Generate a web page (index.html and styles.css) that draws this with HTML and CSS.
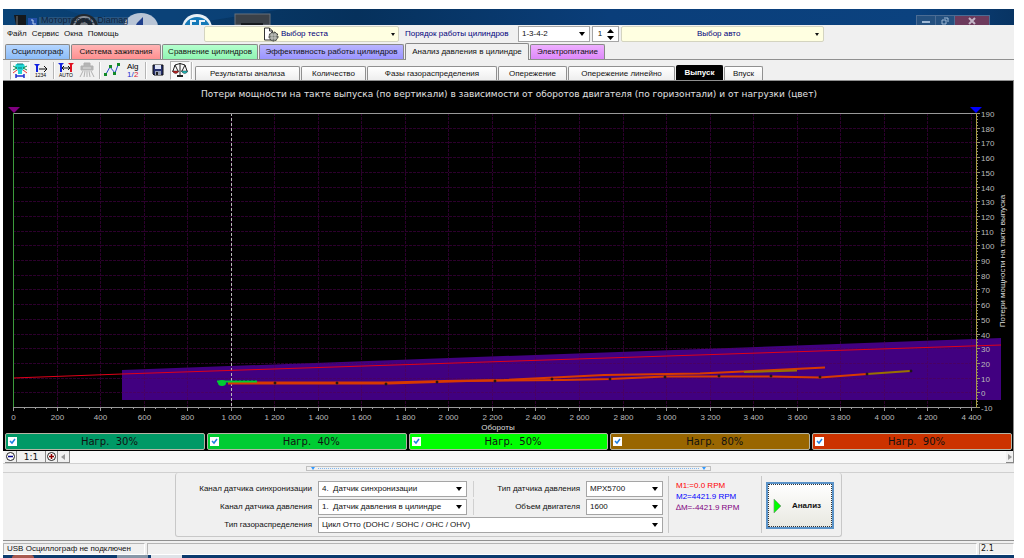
FILE: index.html
```
<!DOCTYPE html>
<html lang="ru">
<head>
    <meta charset="UTF-8">
    <meta name="viewport" content="width=device-width, initial-scale=1.0">
    <title>USB Осциллограф</title>
    <link rel="stylesheet" href="styles.css">
</head>
<body>
    <div class="app">
        <div class="titlebar">
            <svg class="desktop" width="280" height="16" viewBox="0 0 280 16" aria-hidden="true">
                <path d="M60 0L280 0L180 16L110 16Z" fill="#0d4a86" opacity=".5"/>
                <path d="M11 6h12v10H13z" fill="#15181c"/>
                <path d="M14 7v9" stroke="#777" stroke-width="1"/>
                <rect x="25" y="9" width="9" height="7" fill="#2450a8"/>
                <path d="M28 11h2v4h3" stroke="#b8d0f0" fill="none"/>
                <path d="M36 8h96v8H36z" fill="#3d6489" opacity=".6"/>
                <ellipse cx="81" cy="18" rx="14" ry="13" fill="#23282e"/>
                <ellipse cx="81" cy="18" rx="10" ry="10" fill="none" stroke="#8a9098" stroke-width="2"/>
                <circle cx="81" cy="17" r="4" fill="#777c82"/>
                <ellipse cx="138" cy="18" rx="17" ry="14" fill="#b9c5d6"/>
                <path d="M134 14l6-6v8h-7z" fill="#1f3f8c"/>
                <ellipse cx="194" cy="19" rx="15" ry="14" fill="#e8f0f6"/>
                <ellipse cx="194" cy="20" rx="13" ry="12" fill="#1479b8"/>
                <path d="M188 16v-4h5M197 16v-4h5" stroke="#e8f0f6" stroke-width="2" fill="none"/>
                <rect x="232" y="5" width="35" height="11" fill="#3b4148" stroke="#68717a"/>
                <path d="M238 15h22" stroke="#161a1f" stroke-width="2"/>
                <text class="caption" x="38" y="14">Мотортестер Diamag</text>
            </svg>
            <div class="window-buttons">
                <button aria-label="Свернуть"><svg width="8" height="8"><path d="M0 5h8" stroke="#9fb9d6" stroke-width="2"/></svg></button>
                <button aria-label="Развернуть"><svg width="8" height="8"><path d="M1 3h4v4h-4zM3 1h4v4" stroke="#9fb9d6" fill="none"/></svg></button>
                <button class="close" aria-label="Закрыть"><svg width="8" height="8"><path d="M1 1l6 6M7 1l-6 6" stroke="#c3b5c6" stroke-width="2"/></svg></button>
            </div>
        </div>

        <header class="menu-row">
            <nav class="menu">
                <a href="#">Файл</a>
                <a href="#">Сервис</a>
                <a href="#">Окна</a>
                <a href="#">Помощь</a>
            </nav>
            <button class="picker picker-test">
                <svg width="16" height="15" viewBox="0 0 16 15" aria-hidden="true">
                    <path d="M1.500 1h5l3 3v9h-8z" fill="#fff" stroke="#333"/>
                    <path d="M6.500 1v3h3" fill="none" stroke="#333"/>
                    <circle cx="10.500" cy="9.500" r="4.500" fill="#7d837a" stroke="#333" stroke-dasharray="2 1"/>
                    <path d="M7 8h7M7 11h7M9 6v7M12 6v7" stroke="#ddd" stroke-width=".7"/>
                </svg>
                <span>Выбор теста</span>
            </button>
            <label class="order-label" for="order">Порядок работы цилиндров</label>
            <select id="order" class="order"><option>1-3-4-2</option></select>
            <div class="spinner">
                <input type="text" value="1" aria-label="Номер цилиндра">
                <svg width="7" height="11" viewBox="0 0 7 11" aria-hidden="true"><path d="M0 4l3.500-4L7 4zM0 7l3.500 4L7 7z"/></svg>
            </div>
            <button class="picker picker-car"><span>Выбор авто</span></button>
        </header>

        <nav class="tabs">
            <button class="tab blue">Осциллограф</button>
            <button class="tab red">Система зажигания</button>
            <button class="tab green">Сравнение цилиндров</button>
            <button class="tab violet">Эффективность работы цилиндров</button>
            <button class="tab current">Анализ давления в цилиндре</button>
            <button class="tab pink">Электропитание</button>
        </nav>

        <div class="toolbar">
            <div class="tools">
                <button class="tool pressed" aria-label="Форсунка">
                    <svg width="16" height="16" viewBox="0 0 16 16"><path d="M4 2h8l1 3-3 4v3H6V9L3 5z" fill="#20d6d6"/><path d="M1 4l4 2-4 2M15 4l-4 2 4 2" stroke="#138a50" fill="none"/><path d="M1 11l4-3M15 11l-4-3" stroke="#e33" fill="none"/><path d="M5 2h6M6 6h4" stroke="#087878"/><path d="M4 14h8M4 12v4M12 12v4" stroke="#2030d0" stroke-width="1.500"/></svg>
                </button>
                <button class="tool" aria-label="Линейка">
                    <svg width="16" height="16" viewBox="0 0 16 16"><path d="M1 2h6L4 5z" fill="#1020e0"/><path d="M4 4v6" stroke="#1020e0" stroke-width="2"/><path d="M6 7h8M11 4l3 3-3 3" fill="none" stroke="#111"/><text x="2" y="15" font-size="5">1234</text></svg>
                </button>
                <i class="divider"></i>
                <button class="tool" aria-label="Автоматическая линейка">
                    <svg width="16" height="16" viewBox="0 0 16 16"><path d="M0 1h6L3 4z" fill="#1020e0"/><path d="M3 3v7" stroke="#1020e0" stroke-width="2"/><path d="M10 1h6l-3 3z" fill="#e01020"/><path d="M13 3v7" stroke="#e01020" stroke-width="2"/><path d="M4 6h8M6 4L4 6l2 2M10 4l2 2-2 2" fill="none" stroke="#111"/><text x="1" y="15" font-size="5">AUTO</text></svg>
                </button>
                <button class="tool" aria-label="Датчик">
                    <svg width="16" height="16" viewBox="0 0 16 16"><path d="M5 1h6v3h3v4H2V4h3zM4 9l-3 6M6 9l-1 6M8 9v6M10 9l1 6M12 9l3 6" fill="#b5b5b5" stroke="#b0b0b0"/><path d="M4 6h8" stroke="#ddd"/></svg>
                </button>
                <i class="divider"></i>
                <button class="tool" aria-label="График">
                    <svg width="16" height="16" viewBox="0 0 16 16"><path d="M2 12l4-7 5 6 3-8" fill="none" stroke="#2448c8"/><path d="M0 11h3v3H0zM5 3h3v3H5zM9 10h3v3H9zM13 1h3v3h-3z" fill="#128a28"/></svg>
                </button>
                <button class="tool" aria-label="Алгоритм">
                    <svg width="16" height="16" viewBox="0 0 16 16"><text x="1" y="7" font-size="8">Alg</text><text x="1" y="15" font-size="8" fill="#2030d0">1/</text><text x="8" y="15" font-size="8" fill="#e02030">2</text></svg>
                </button>
                <i class="divider"></i>
                <button class="tool" aria-label="Сохранить">
                    <svg width="16" height="16" viewBox="0 0 16 16"><path d="M3 3h10v10H4l-1-1z" fill="#26306e" stroke="#111"/><path d="M5 3h6v4H5z" fill="#dfe4f4"/><path d="M5 9h6v4H5z" fill="#9aa2b8"/><path d="M6 10h2v3H6z" fill="#222"/></svg>
                </button>
                <button class="tool pressed" aria-label="Сравнить">
                    <svg width="16" height="16" viewBox="0 0 16 16"><path d="M8 1v12M3 3q5-3 10 0M3 3L1 9M3 3l3 6M13 3l-3 6M13 3l2 6" fill="none" stroke="#222"/><path d="M0 9h7q-3 5-7 0z" fill="#c02020" stroke="#222" stroke-width=".5"/><path d="M9 9h7q-3 5-7 0z" fill="#20c0c0" stroke="#222" stroke-width=".5"/><path d="M5 14h6" stroke="#222" stroke-width="2"/></svg>
                </button>
                <i class="divider"></i>
            </div>
            <nav class="subtabs">
                <button class="subtab w-results">Результаты анализа</button>
                <button class="subtab w-count">Количество</button>
                <button class="subtab w-phases">Фазы газораспределения</button>
                <button class="subtab w-advance">Опережение</button>
                <button class="subtab w-linear">Опережение линейно</button>
                <button class="subtab w-exhaust current">Выпуск</button>
                <button class="subtab w-intake">Впуск</button>
            </nav>
        </div>

        <main class="chart">
            <svg class="plot" viewBox="-1 0 1011 352" role="img" aria-label="Потери мощности на такте выпуска">
                <text class="title" x="505" y="16">Потери мощности на такте выпуска (по вертикали) в зависимости от оборотов двигателя (по горизонтали) и от нагрузки (цвет)</text>
                <polygon class="band" points="118,289 997,257 997,319 118,319"/>
                <g id="grid"></g>
                <path class="cursor" d="M227.500 32V326"/>
                <path class="limit" d="M9 297L118 293L997 264"/>

                <path class="load90" d="M224 301.500H385L440 300L500 299L550 296.500L600 294L696 292.500L760 289.500L821 286.500"/>
                <path class="load90" d="M224 302.500H385L463 300L560 299L606 298L661 295.500L716 295.500L767 295.500L816 296.500L863 293"/>
                <path class="load80" d="M740 291L793 289.500M863 293L906 290"/>
                <path class="load40" d="M213 300.500H253"/>
                <ellipse cx="218" cy="302" rx="4" ry="3" fill="#00cc33"/>
                <path class="noise" d="M229 299.500H253"/>
                <g class="points">
                    <circle cx="271" cy="302" r="1"/>
                    <circle cx="333" cy="302" r="1"/>
                    <circle cx="382" cy="303" r="1"/>
                    <circle cx="433" cy="301" r="1"/>
                    <circle cx="491" cy="300" r="1"/>
                    <circle cx="548" cy="298" r="1"/>
                    <circle cx="606" cy="298" r="1"/>
                    <circle cx="661" cy="296" r="1"/>
                    <circle cx="715" cy="295" r="1"/>
                    <circle cx="767" cy="295" r="1"/>
                    <circle cx="816" cy="296" r="1"/>
                    <circle cx="863" cy="293" r="1"/>
                    <circle cx="907" cy="290" r="1"/>
                </g>

                <path class="frame" d="M9 32.500H972M9 326.500H972"/>
                <path class="axis-left" d="M9.500 32V326"/>
                <path class="axis-right" d="M972.500 32V326"/>
                <g id="scale"></g>
                <path d="M4 26h12l-6 6z" fill="#800080"/>
                <path d="M966 26h12l-6 6z" fill="#0000ff"/>
                <text class="axis-title" x="494" y="349">Обороты</text>
                <text class="axis-title side" transform="translate(1001 180) rotate(-90)">Потери мощности на такте выпуска</text>
            </svg>
            <div class="loads">
                <label class="load l30"><input type="checkbox" checked><span>Нагр.&nbsp; 30%</span></label>
                <label class="load l40"><input type="checkbox" checked><span>Нагр.&nbsp; 40%</span></label>
                <label class="load l50"><input type="checkbox" checked><span>Нагр.&nbsp; 50%</span></label>
                <label class="load l80"><input type="checkbox" checked><span>Нагр.&nbsp; 80%</span></label>
                <label class="load l90"><input type="checkbox" checked><span>Нагр.&nbsp; 90%</span></label>
            </div>
        </main>

        <div class="zoom-row">
            <button class="zoom" aria-label="Уменьшить"><svg width="9" height="9" viewBox="0 0 9 9"><circle cx="4.500" cy="4.500" r="4" fill="#fff" stroke="#222"/><path d="M2 4.500h5" stroke="#00008b" stroke-width="1.500"/></svg></button>
            <button class="zoom ratio">1:1</button>
            <button class="zoom" aria-label="Увеличить"><svg width="9" height="9" viewBox="0 0 9 9"><circle cx="4.500" cy="4.500" r="4" fill="#fff" stroke="#222"/><path d="M2 4.500h5M4.500 2v5" stroke="#8b0000" stroke-width="1.500"/></svg></button>
            <button class="zoom" aria-label="Влево"><svg width="5" height="6"><path d="M4 0v6L0 3z" fill="#999"/></svg></button>
            <div class="track"></div>
            <button class="zoom right" aria-label="Вправо"><svg width="5" height="6"><path d="M1 0v6l4-3z" fill="#999"/></svg></button>
        </div>

        <div class="splitter">
            <button class="handle" aria-label="Свернуть панель">
                <svg width="6" height="3"><path d="M1 0h4L3 3z" fill="#3399ff"/></svg>
                <i class="dots"></i>
                <svg width="6" height="3"><path d="M1 0h4L3 3z" fill="#3399ff"/></svg>
            </button>
        </div>

        <section class="settings">
            <div class="panel">
                <div class="fields">
                    <label for="sync">Канал датчика синхронизации</label>
                    <select id="sync"><option>4.&nbsp; Датчик синхронизации</option></select>
                    <label class="second" for="sensor">Тип датчика давления</label>
                    <select id="sensor"><option>MPX5700</option></select>
                    <label for="pressure">Канал датчика давления</label>
                    <select id="pressure"><option>1.&nbsp; Датчик давления в цилиндре</option></select>
                    <label class="second" for="volume">Объем двигателя</label>
                    <select id="volume"><option>1600</option></select>
                    <label for="cycle">Тип газораспределения</label>
                    <select id="cycle" class="wide"><option>Цикл Отто (DOHC / SOHC / OHC / OHV)</option></select>
                </div>
                <div class="markers">
                    <span class="m1">M1:=0.0 RPM</span>
                    <span class="m2">M2=4421.9 RPM</span>
                    <span class="dm">∆M=-4421.9 RPM</span>
                </div>
                <div class="run">
                    <button class="analyze">
                        <svg width="9" height="14" viewBox="0 0 9 14" aria-hidden="true"><path d="M1 0l7 7-7 7z" fill="#00ff00" stroke="#7a9a7a" stroke-width=".7"/></svg>
                        <span>Анализ</span>
                    </button>
                </div>
            </div>
        </section>

        <footer class="status">
            <span class="device">USB Осциллограф не подключен</span>
            <span class="message"></span>
            <span class="version">2.1</span>
        </footer>
        <div class="taskbar"><i class="start"></i><i class="item"></i><i class="item active"></i></div>
    </div>

    <script>
        const left = 9, right = 972, upper = 32, bottom = 326;
        const px = rpm => Math.round(left + rpm * 0.2177) + 0.5;
        const py = loss => Math.round(bottom - (loss + 10) * 1.47) + 0.5;

        let grid = '', ticks = '', labels = '', rightTicks = '';

        // Обороты: подпись каждые 200, мелкие деления каждые 50
        for (let rpm = 0; rpm <= 4400; rpm += 50) {
            const x = px(rpm);
            const major = rpm % 200 === 0;
            ticks += `M${x} ${bottom}v${major ? 4 : 2}`;
            if (major) {
                if (rpm > 0) grid += `M${x} ${upper}V${bottom}`;
                const text = rpm < 1000 ? rpm : Math.floor(rpm / 1000) + ' ' + String(rpm % 1000).padStart(3, '0');
                labels += `<text class="num" x="${x}" y="339">${text}</text>`;
            }
        }

        // Потери мощности: подпись каждые 10
        for (let loss = -10; loss <= 190; loss += 2) {
            const y = py(loss);
            const major = loss % 10 === 0;
            rightTicks += `M${right} ${y}h${major ? 4 : 2}`;
            if (major) {
                if (loss > -10 && loss < 190) grid += `M${left} ${y}H${right}`;
                labels += `<text class="num start" x="${right + 5}" y="${y + 3}">${loss}</text>`;
            }
        }

        document.getElementById('grid').innerHTML = `<path class="gridline" d="${grid}"/>`;
        document.getElementById('scale').innerHTML =
            `<path class="frame" d="${ticks}"/><path class="ticks-right" d="${rightTicks}"/>${labels}`;
    </script>
</body>
</html>
```
FILE: styles.css
```
* {
    box-sizing: border-box;
}

body {
    margin: 0;
    background: #fff;
    color: #111;
    font-family: "Liberation Sans", Arial, sans-serif;
    font-size: 8px;
    line-height: 10px;
}

button, select, input {
    font: inherit;
    color: inherit;
    margin: 0;
    padding: 0;
    border-radius: 0;
}

button {
    border: none;
    background: none;
    white-space: nowrap;
}

svg {
    flex: none;
    display: block;
}

.app {
    margin: 9px 10px 0 3px;
    background: #f0f0f0;
}

/* Заголовок окна */
.titlebar {
    display: flex;
    justify-content: space-between;
    align-items: flex-end;
    height: 16px;
    overflow: hidden;
    background: linear-gradient(90deg, #0a4377, #06315c 35%, #0a3e7a 60%, #0b427f 90%, #083463);
}

.caption {
    fill: #10243c;
    font-size: 9px;
}

.window-buttons {
    display: flex;
    margin-right: 24px;
    border: 1px solid #4b6c94;
    border-bottom: none;
}

.window-buttons button {
    display: flex;
    align-items: center;
    justify-content: center;
    width: 19px;
    height: 9px;
    border-right: 1px solid #4b6c94;
    background: #24507f;
}

.window-buttons .close {
    width: 34px;
    border-right: none;
    background: #6d3a5c;
}

/* Меню */
.menu-row {
    display: flex;
    align-items: center;
    height: 18px;
}

.menu {
    display: flex;
    gap: 5px;
    width: 201px;
    padding-left: 4px;
}

.menu a {
    color: #111;
    text-decoration: none;
}

.picker {
    display: flex;
    align-items: center;
    justify-content: center;
    gap: 2px;
    height: 16px;
    border: 1px solid #d4d4c0;
    border-radius: 2px;
    background: #ffffe1;
    color: #00007b;
}

.picker::after {
    content: "";
    margin-left: auto;
    border: 2px solid transparent;
    border-top: 3px solid #111;
    border-bottom: none;
}

.picker span {
    flex: none;
}

.picker-test {
    width: 195px;
    padding: 0 3px 0 58px;
}

.picker-car {
    width: 203px;
    padding: 0 4px 0 75px;
}

.order-label {
    width: 119px;
    padding-left: 6px;
    color: #00007b;
    white-space: nowrap;
}

select {
    appearance: none;
    height: 16px;
    padding: 0 14px 0 3px;
    border: 1px solid #a5a5a5;
    background: #fff url("data:image/svg+xml,%3Csvg xmlns='http://www.w3.org/2000/svg' width='6' height='4'%3E%3Cpath d='M0 0h6L3 4z'/%3E%3C/svg%3E") no-repeat right 4px center;
}

.order {
    width: 72px;
    margin-right: 2px;
}

.spinner {
    display: flex;
    align-items: center;
    width: 27px;
    height: 16px;
    margin-right: 2px;
    padding-right: 4px;
    border: 1px solid #a5a5a5;
    background: #fff;
}

.spinner input {
    width: 14px;
    border: none;
    text-align: center;
}

/* Вкладки */
.tabs {
    display: flex;
    align-items: flex-end;
    height: 17px;
    padding-left: 2px;
    border-bottom: 1px solid #909090;
}

.tab {
    height: 15px;
    margin-right: 1px;
    border: 1px solid #888;
    border-bottom: none;
    border-radius: 2px 2px 0 0;
}

.blue {
    width: 65px;
    background: linear-gradient(#b5d6ff, #8cbcf8);
}

.red {
    width: 90px;
    background: linear-gradient(#ffb5b5, #ff9090);
}

.green {
    width: 96px;
    background: linear-gradient(#b5ffce, #90f5b2);
}

.violet {
    width: 145px;
    background: linear-gradient(#b9b5ff, #9a94ff);
}

.pink {
    width: 75px;
    background: linear-gradient(#eeb0ff, #dd88fa);
}

.tab.current {
    width: 124px;
    height: 17px;
    margin-bottom: -1px;
    background: #f0f0f0;
}

/* Панель инструментов */
.toolbar {
    display: flex;
    align-items: flex-end;
    height: 21px;
    border-bottom: 1px solid #909090;
}

.tools {
    display: flex;
    align-items: center;
    justify-content: space-between;
    width: 190px;
    height: 20px;
    margin-right: 2px;
    padding-left: 7px;
}

.tool {
    display: flex;
    align-items: center;
    justify-content: center;
    width: 20px;
    height: 19px;
    border: 1px solid transparent;
}

.tool.pressed {
    border-color: #b0b0b0 #fff #fff #b0b0b0;
    background: #fafafa;
}

.divider {
    width: 2px;
    height: 17px;
    border-left: 1px solid #b5b5b5;
    border-right: 1px solid #fff;
}

.subtabs {
    display: flex;
    align-items: flex-end;
    gap: 1px;
}

.subtab {
    height: 14px;
    border: 1px solid #909090;
    border-bottom: none;
    border-radius: 2px 2px 0 0;
    background: linear-gradient(#fff, #eee);
}

.subtab.current {
    height: 15px;
    border-color: #000;
    background: #000;
    color: #fff;
    font-weight: bold;
}

.w-results { width: 105px; }
.w-count { width: 65px; }
.w-phases { width: 130px; }
.w-advance { width: 69px; }
.w-linear { width: 107px; }
.w-exhaust { width: 47px; }
.w-intake { width: 39px; }

/* График */
.chart {
    padding-bottom: 1px;
    background: #000;
    box-shadow: inset -1px 0 #888;
}

.plot {
    width: 100%;
    height: auto;
    font-size: 8px;
}

.plot path {
    stroke-width: 1;
}

.title {
    fill: #e0e0e0;
    font-family: "DejaVu Sans", Verdana, sans-serif;
    font-size: 9px;
    text-anchor: middle;
}

.band { fill: #410080; }
.gridline { stroke: #500050; stroke-dasharray: 3 1; opacity: .55; }
.cursor { stroke: #bbb; stroke-dasharray: 3 2; }
.limit { stroke: #e00018; fill: none; }
.plot .load90 { stroke: #d83a00; stroke-width: 2; fill: none; }
.plot .load80 { stroke: #997000; stroke-width: 2; }
.plot .load40 { stroke: #00cc33; stroke-width: 2; }
.noise { stroke: #063; stroke-dasharray: 2 2; }
.points { fill: #5a2a00; stroke: #111; stroke-width: 1; }
.frame { stroke: #999; }
.axis-left { stroke: #3c9a3c; }
.axis-right { stroke: #b0a030; }
.ticks-right { stroke: #999070; }

.num {
    fill: #bbb;
    text-anchor: middle;
}

.num.start {
    text-anchor: start;
}

.axis-title {
    fill: #ddd;
    text-anchor: middle;
}

.loads {
    display: grid;
    grid-template-columns: repeat(5, 1fr);
    gap: 2px;
    padding: 0 2px;
}

.load {
    display: flex;
    align-items: center;
    height: 17px;
    padding: 0 2px;
    border: 1px solid #b5b5a5;
    border-radius: 2px;
    color: #111;
    font-family: "DejaVu Sans", Verdana, sans-serif;
    font-size: 10px;
}

.load span {
    flex: 1;
    text-align: center;
}

.load input {
    appearance: none;
    width: 9px;
    height: 9px;
    margin: 0;
    background: #fff;
}

.load input:checked {
    background: #fff url("data:image/svg+xml,%3Csvg xmlns='http://www.w3.org/2000/svg' width='9' height='9'%3E%3Cpath d='M2 4l2 2 3-4' fill='none' stroke='%231e80e0' stroke-width='1.5'/%3E%3C/svg%3E") center no-repeat;
}

.l30 { background: #009966; }
.l40 { background: #00cc33; }
.l50 { background: #00ff00; }
.l80 { background: #996600; }
.l90 { background: #cc3300; }

/* Масштаб и прокрутка */
.zoom-row {
    display: flex;
    height: 13px;
    padding-left: 2px;
    border-bottom: 1px solid #d0d0d0;
    background: #f8f8f8;
}

.zoom {
    display: flex;
    align-items: center;
    justify-content: center;
    width: 12px;
    border-right: 1px solid #888;
    border-bottom: 1px solid #888;
    background: #f0f0f0;
}

.zoom.ratio {
    width: 29px;
    font-family: "DejaVu Sans", Verdana, sans-serif;
    font-size: 9px;
}

.zoom.right {
    width: 8px;
}

.track {
    flex: 1;
}

.splitter {
    display: flex;
    justify-content: center;
    padding: 2px 0 1px;
}

.handle {
    display: flex;
    align-items: center;
    gap: 2px;
    width: 40%;
    height: 5px;
    padding: 0 3px;
    border: 1px solid #c0c0c0;
}

.dots {
    flex: 1;
    border-top: 1px dotted #80b8f0;
}

/* Настройки */
.settings {
    display: flex;
    justify-content: center;
    padding-bottom: 3px;
    border-top: 1px solid #d0d0d0;
    border-bottom: 1px solid #909090;
}

.panel {
    display: flex;
    align-items: stretch;
    padding: 3px 7px 3px 17px;
    border: 1px solid #c8c8c8;
    border-top: none;
    border-radius: 3px;
}

.fields {
    display: grid;
    grid-template-columns: 119px 149px 107px 77px;
    gap: 2px 6px;
    padding: 5px 5px 0 0;
}

.fields label {
    align-self: center;
    text-align: right;
    white-space: nowrap;
}

.fields .second {
    align-self: stretch;
    line-height: 16px;
    border-left: 1px solid #d0d0d0;
}

.fields .wide {
    grid-column: 2 / -1;
}

.markers {
    display: flex;
    flex-direction: column;
    width: 93px;
    padding: 4px 0 0 7px;
    border-left: 1px solid #c8c8c8;
    line-height: 11px;
}

.m1 { color: #ff0000; }
.m2 { color: #0000ff; }
.dm { color: #800080; }

.run {
    padding: 6px 0 4px 4px;
    border-left: 1px solid #c8c8c8;
}

.analyze {
    display: flex;
    align-items: center;
    gap: 10px;
    width: 68px;
    height: 47px;
    padding-left: 5px;
    border: 2px solid #5b93c8;
    outline: 1px dotted #333;
    outline-offset: -3px;
    background: linear-gradient(#fff, #e8e8e0);
    font-weight: bold;
}

/* Строка состояния */
.status {
    display: flex;
    gap: 2px;
    padding-top: 2px;
}

.status span {
    height: 12px;
    padding: 0 3px;
    border: 1px solid #b5b5b5;
    border-right-color: #fff;
    border-bottom-color: #fff;
    white-space: nowrap;
}

.status .device {
    width: 142px;
}

.status .message {
    flex: 1;
}

.status .version {
    width: 35px;
    padding: 0 1px;
    font-family: "DejaVu Sans", Verdana, sans-serif;
}

.taskbar {
    display: flex;
    gap: 3px;
    height: 3px;
    padding-left: 9px;
    background: #0b3a6e;
}

.start {
    width: 22px;
    margin-right: 80px;
    border-radius: 11px 11px 0 0;
    background: #a85a50;
}

.item {
    width: 31px;
    background: #8797a8;
}

.item.active {
    background: #dfe3e8;
}
```
